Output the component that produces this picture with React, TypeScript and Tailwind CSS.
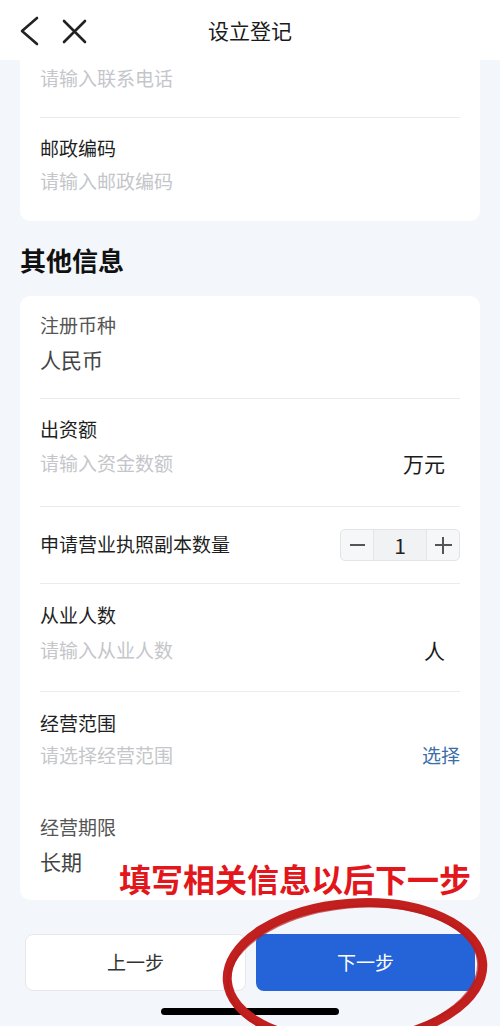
import React from "react";

const font = { fontFamily: '"Noto Sans CJK SC", "Noto Sans", sans-serif' };

function Divider() {
  return <div className="h-px bg-[#ececec]" />;
}

function Stepper() {
  return (
    <div className="flex h-[32px] w-[120px] overflow-hidden rounded-[5px] border border-[#e2e4e7] bg-[#f6f7f9]">
      <div className="flex w-[33px] items-center justify-center border-r border-[#e2e4e7]">
        <div className="h-[2px] w-[15px] bg-[#555]" />
      </div>
      <div className="flex flex-1 items-center justify-center bg-[#f1f2f4] text-[21px] leading-none text-[#222]">1</div>
      <div className="relative flex w-[33px] items-center justify-center border-l border-[#e2e4e7]">
        <div className="h-[2px] w-[17px] bg-[#555]" />
        <div className="absolute h-[17px] w-[2px] bg-[#555]" />
      </div>
    </div>
  );
}

export default function App() {
  return (
    <div className="relative h-[1026px] w-[500px] overflow-hidden bg-[#f3f6fa]" style={font}>
      {/* top bar */}
      <div className="relative flex h-[60px] items-center bg-white">
        <svg className="absolute left-[17px] top-[14px]" width="26" height="34" viewBox="0 0 26 34" fill="none" stroke="#222" strokeWidth="2.6" strokeLinecap="round" strokeLinejoin="round">
          <path d="M20 4 L5 17 L20 30" />
        </svg>
        <svg className="absolute left-[60px] top-[18px]" width="28" height="28" viewBox="0 0 28 28" fill="none" stroke="#222" strokeWidth="2.6" strokeLinecap="round">
          <path d="M4 3 L25 24 M25 3 L4 24" />
        </svg>
        <div className="w-full text-center text-[21px] leading-none text-[#1a1a1a]">设立登记</div>
      </div>

      {/* contact card, scrolled under header */}
      <div className="mx-[20px] rounded-b-[10px] bg-white px-[20px]">
        <div className="pt-[5px] pb-[26px] text-[19px] leading-[26px] text-[#c4c6ca]">请输入联系电话</div>
        <Divider />
        <div className="pt-[17px] pb-[27px]">
          <div className="text-[19px] leading-[26px] text-[#1f1f1f]">邮政编码</div>
          <div className="mt-[7px] text-[19px] leading-[26px] text-[#c4c6ca]">请输入邮政编码</div>
        </div>
      </div>

      <div className="mx-[20px] mt-[22px] mb-[19px] text-[26px] font-bold leading-[34px] text-[#111]">其他信息</div>

      <div className="mx-[20px] h-[604px] rounded-[10px] bg-white px-[20px]">
        <div className="pt-[16px] pb-[26px]">
          <div className="text-[19px] leading-[26px] text-[#555]">注册币种</div>
          <div className="mt-[8px] text-[21px] leading-[26px] text-[#444]">人民币</div>
        </div>
        <Divider />
        <div className="pt-[17px] pb-[30px]">
          <div className="text-[19px] leading-[26px] text-[#1f1f1f]">出资额</div>
          <div className="mt-[8px] flex items-center justify-between leading-[26px]">
            <span className="text-[19px] text-[#c4c6ca]">请输入资金数额</span>
            <span className="pr-[15px] text-[21px] text-[#1a1a1a]">万元</span>
          </div>
        </div>
        <Divider />
        <div className="flex h-[76px] items-center justify-between">
          <span className="-mt-[2px] text-[19px] leading-[26px] text-[#1f1f1f]">申请营业执照副本数量</span>
          <Stepper />
        </div>
        <Divider />
        <div className="pt-[18px] pb-[28px]">
          <div className="text-[19px] leading-[26px] text-[#1f1f1f]">从业人数</div>
          <div className="mt-[9px] flex items-center justify-between leading-[26px]">
            <span className="text-[19px] text-[#c4c6ca]">请输入从业人数</span>
            <span className="pr-[15px] text-[21px] text-[#1a1a1a]">人</span>
          </div>
        </div>
        <Divider />
        <div className="pt-[18px] pb-[28px]">
          <div className="text-[19px] leading-[26px] text-[#1f1f1f]">经营范围</div>
          <div className="mt-[6px] flex items-center justify-between leading-[26px]">
            <span className="text-[19px] text-[#c4c6ca]">请选择经营范围</span>
            <span className="text-[19px] text-[#3b6ea8]">选择</span>
          </div>
        </div>
        <div className="pt-[18px]">
          <div className="text-[19px] leading-[26px] text-[#555]">经营期限</div>
          <div className="mt-[8px] text-[21px] leading-[26px] text-[#444]">长期</div>
        </div>
      </div>

      {/* bottom actions */}
      <div className="mt-[34px] flex gap-[10px] px-[25px]">
        <button className="flex h-[57px] flex-1 items-center justify-center rounded-[8px] border border-[#e6e8eb] bg-white text-[19px] text-[#333]">上一步</button>
        <button className="flex h-[57px] flex-1 items-center justify-center rounded-[8px] bg-[#2563d9] text-[19px] text-white">下一步</button>
      </div>
      <div className="mt-[17px] flex justify-center">
        <div className="h-[7px] w-[178px] rounded-full bg-black" />
      </div>

      {/* annotation */}
      <div className="absolute left-[119px] top-[858px] text-[32px] font-bold leading-[40px] text-[#e2161b]">填写相关信息以后下一步</div>
      <svg className="pointer-events-none absolute left-0 top-[880px]" width="500" height="146" viewBox="0 880 500 146" fill="none">
        <ellipse cx="355" cy="972" rx="128" ry="69" transform="rotate(-4 355 972)" stroke="#c2201f" strokeWidth="9" />
        <ellipse cx="353" cy="974" rx="126" ry="67" transform="rotate(-6 353 974)" stroke="#b81c1c" strokeWidth="3" opacity="0.7" />
      </svg>
    </div>
  );
}
